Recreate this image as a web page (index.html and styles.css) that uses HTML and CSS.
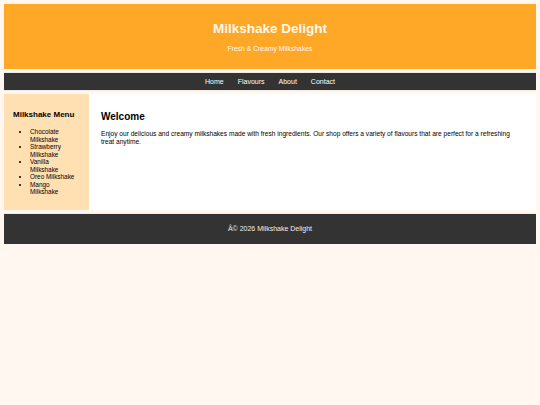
FILE: index.html
```html
<!DOCTYPE html>
<html lang="en">
<head>
<meta charset="utf-8">
<title>Milkshake Delight</title>
<link rel="stylesheet" href="styles.css">
</head>
<body>
<header class="site-header">
  <h1 class="title">Milkshake Delight</h1>
  <p class="tagline">Fresh &amp; Creamy Milkshakes</p>
</header>
<nav class="site-nav">
  <a href="#">Home</a>
  <a href="#">Flavours</a>
  <a href="#">About</a>
  <a href="#">Contact</a>
</nav>
<div class="layout">
  <aside class="sidebar">
    <h3 class="menu-title">Milkshake Menu</h3>
    <ul class="menu-list">
      <li>Chocolate Milkshake</li>
      <li>Strawberry Milkshake</li>
      <li>Vanilla Milkshake</li>
      <li>Oreo Milkshake</li>
      <li>Mango Milkshake</li>
    </ul>
  </aside>
  <main class="content">
    <h2 class="content-title">Welcome</h2>
    <p class="content-text">Enjoy our delicious and creamy milkshakes made with fresh ingredients. Our shop offers a variety of flavours that are perfect for a refreshing treat anytime.</p>
  </main>
</div>
<footer class="site-footer">Â© 2026 Milkshake Delight</footer>
</body>
</html>
```
FILE: styles.css
```css
html, body {
  background: #fff7f0;
}
body {
  margin: 4px;
  font-family: "Liberation Sans", Arial, sans-serif;
  font-size: 7px;
  color: #000;
}
.site-header {
  background: #ffa726;
  color: #fff8ee;
  text-align: center;
  padding: 10px;
}
.title {
  font-size: 13.5px;
  line-height: 16px;
  margin: 7px 0 8px;
  font-weight: bold;
}
.tagline {
  font-size: 6.8px;
  line-height: 8px;
  margin: 0 0 6px;
}
.site-nav {
  margin-top: 4px;
  background: #333;
  display: flex;
  justify-content: center;
  gap: 14px;
  padding: 5px 0 4px;
  line-height: 8px;
  box-shadow: 0 0 1px #aaa;
}
.site-nav a {
  color: #fff;
  text-decoration: none;
  font-size: 7px;
}
.layout {
  margin-top: 4px;
  display: flex;
}
.sidebar {
  width: 85px;
  flex: none;
  box-sizing: border-box;
  background: #ffe0b2;
  padding: 10px 11px 14px 9px;
}
.menu-title {
  font-size: 8px;
  line-height: 10px;
  margin: 6px 0 8px;
}
.menu-list {
  margin: 0;
  padding-left: 17px;
  font-size: 6.4px;
  line-height: 7.5px;
}
.content {
  flex: 1;
  background: #fff;
  padding: 11px 12px 10px;
}
.content-title {
  font-size: 10px;
  line-height: 12px;
  margin: 6px 0 7px;
}
.content-text {
  margin: 0;
  font-size: 6.6px;
  line-height: 8px;
}
.site-footer {
  margin-top: 4px;
  background: #333;
  color: #eee;
  text-align: center;
  padding: 11px 0;
  line-height: 8px;
  font-size: 7px;
  box-shadow: 0 0 1px #aaa;
}
```
